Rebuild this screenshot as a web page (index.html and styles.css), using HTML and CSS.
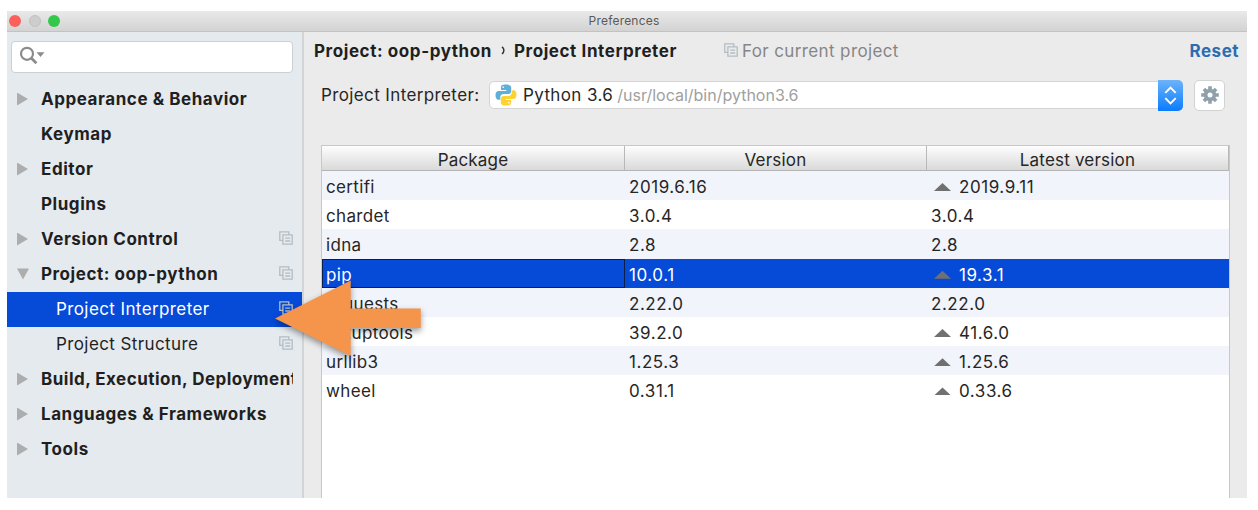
FILE: index.html
```html
<!DOCTYPE html>
<html lang="en">
<head>
<meta charset="utf-8">
<title>Preferences</title>
<link rel="stylesheet" href="styles.css">
</head>
<body>
<svg width="0" height="0" class="defs">
  <symbol id="copy" viewBox="0 0 14 14"><path d="M3.2 9.3H.8V.8h9v2.4M3.9 3.9h9.3v9.3H3.9zM6.2 7.1h5M6.2 10h5" fill="none" stroke="currentColor" stroke-width="1.3"/></symbol>
</svg>
<div class="window">
  <header class="titlebar">
    <div class="lights"><i class="light red"></i><i class="light idle"></i><i class="light green"></i></div>
    <span class="title">Preferences</span>
  </header>
  <div class="body">
    <aside class="sidebar">
      <div class="search">
        <svg width="28" height="20" viewBox="0 0 28 20"><circle cx="8" cy="7.8" r="6" fill="none" stroke="#8b8b8b" stroke-width="2.2"/><path d="M12.2 12l5.2 5.2" stroke="#8b8b8b" stroke-width="2.8"/><path d="M17.5 6.3h8L21.500 11z" fill="#8b8b8b"/></svg>
      </div>
      <ul class="tree">
        <li class="item"><i class="arrow"></i><span>Appearance &amp; Behavior</span></li>
        <li class="item"><i class="arrow none"></i><span>Keymap</span></li>
        <li class="item"><i class="arrow"></i><span>Editor</span></li>
        <li class="item"><i class="arrow none"></i><span>Plugins</span></li>
        <li class="item"><i class="arrow"></i><span>Version Control</span><svg class="copy"><use href="#copy"/></svg></li>
        <li class="item"><i class="arrow open"></i><span>Project: oop-python</span><svg class="copy"><use href="#copy"/></svg></li>
        <li class="item child selected"><span>Project Interpreter</span><svg class="copy"><use href="#copy"/></svg></li>
        <li class="item child"><span>Project Structure</span><svg class="copy"><use href="#copy"/></svg></li>
        <li class="item long"><i class="arrow"></i><span>Build, Execution, Deployment</span></li>
        <li class="item"><i class="arrow"></i><span>Languages &amp; Frameworks</span></li>
        <li class="item"><i class="arrow"></i><span>Tools</span></li>
      </ul>
    </aside>
    <main class="content">
      <div class="crumbs">
        <b>Project: oop-python</b><svg class="chevron" viewBox="0 0 5 9"><path d="M1 .8C3.500 2.500 3.500 6 1 8" fill="none" stroke="#333" stroke-width="1.500"/></svg><b>Project Interpreter</b>
        <svg class="copy"><use href="#copy"/></svg><span class="scope">For current project</span>
        <a class="reset">Reset</a>
      </div>
      <div class="chooser">
        <label class="label">Project Interpreter:</label>
        <div class="combo">
          <svg class="python" viewBox="0 0 22 22">
            <path d="M10.700.5c-4 0-4.800 1.200-4.800 3.100V6h5.400v.9H3.700C1.500 6.900.5 8.700.5 11.200s1 4.500 3 4.500h1.800v-2.500c0-2 1.500-3.200 3.400-3.200h4.800c1.500 0 2.700-1.200 2.700-2.800V3.600C16.200 1.500 14.500.5 10.700.5z" fill="#5fb0d9"/>
            <path d="M11.300 21.500c4 0 4.800-1.200 4.800-3.100V16h-5.400v-.9h7.600c2.200 0 3.200-1.800 3.200-4.300s-1-4.500-3-4.500h-1.800v2.500c0 2-1.500 3.200-3.400 3.200H8.500c-1.500 0-2.700 1.200-2.700 2.800v3.600c0 2.100 1.700 3.100 5.500 3.100z" fill="#ffd234"/>
            <circle cx="8.200" cy="3.200" r=".9" fill="#e5f2f8"/><circle cx="13.800" cy="18.700" r=".9" fill="#fff6d0"/>
          </svg>
          <span class="name">Python 3.6</span><span class="path">/usr/local/bin/python3.6</span>
          <span class="stepper"><svg width="13" height="19" viewBox="0 0 13 19"><path d="M1.300 6.800L6.500 1.600l5.200 5.200M1.300 12.200l5.200 5.200 5.200-5.200" fill="none" stroke="#fff" stroke-width="1.900"/></svg></span>
        </div>
        <div class="gear"><svg width="18" height="18" viewBox="-9 -9 18 18"><g stroke="#8fa0aa" stroke-width="3.600"><path d="M0-8.800V8.800M-8.800 0H8.800M-6.100-6.100L6.100 6.100M6.100-6.100L-6.100 6.100"/></g><circle r="6.200" fill="#8fa0aa"/><circle r="2.500" fill="#fff"/></svg></div>
      </div>
      <div class="table">
        <div class="row head"><span>Package</span><span>Version</span><span>Latest version</span></div>
        <div class="row"><span>certifi</span><span>2019.6.16</span><span><i class="up"></i>2019.9.11</span></div>
        <div class="row"><span>chardet</span><span>3.0.4</span><span>3.0.4</span></div>
        <div class="row"><span>idna</span><span>2.8</span><span>2.8</span></div>
        <div class="row active"><span>pip</span><span>10.0.1</span><span><i class="up"></i>19.3.1</span></div>
        <div class="row"><span>requests</span><span>2.22.0</span><span>2.22.0</span></div>
        <div class="row"><span>setuptools</span><span>39.2.0</span><span><i class="up"></i>41.6.0</span></div>
        <div class="row"><span>urllib3</span><span>1.25.3</span><span><i class="up"></i>1.25.6</span></div>
        <div class="row"><span>wheel</span><span>0.31.1</span><span><i class="up"></i>0.33.6</span></div>
      </div>
    </main>
  </div>
</div>
<svg class="pointer" width="170" height="100" viewBox="0 0 170 100"><path d="M5 48.500L80.700 10.500V38.500H150.800V58H80.700V86z" fill="#f5954c"/></svg>
</body>
</html>
```
FILE: styles.css
```css
* { box-sizing: border-box; }
body {
  margin: 0;
  width: 1258px;
  height: 510px;
  overflow: hidden;
  background: #fff;
  padding: 11px 11px 12px 7px;
  font: 17px/20px Inter, "Liberation Sans", sans-serif;
  letter-spacing: .38px;
  color: #262626;
}
.defs, .pointer { position: absolute; }
.window { display: flex; flex-direction: column; height: 487px; background: #ebebeb; }
.titlebar {
  display: grid;
  grid-template-columns: 1fr auto 1fr;
  align-items: center;
  height: 21px;
  padding: 0 8px 0 2px;
  background: linear-gradient(#e9e9e9, #d3d3d3);
  border-bottom: 1px solid #c3c3c3;
}
.lights { display: flex; gap: 7.500px; }
.light { width: 12px; height: 12px; border-radius: 50%; }
.red { background: #fc605b; }
.idle { background: #cdcdcd; border: 1px solid #c0c0c0; }
.green { background: #34c84a; }
.title { font-size: 12px; line-height: 18px; color: #5a5a5a; letter-spacing: .2px; }
.body { display: flex; flex: 1; }
.sidebar { width: 297px; flex: none; padding-top: 9px; background: #e5eaee; border-right: 2px solid #d2d4d6; }
.search {
  display: flex;
  align-items: center;
  width: 282px;
  height: 32px;
  margin-left: 4px;
  padding-left: 7px;
  background: #fff;
  border: 1.500px solid #cbd0d4;
  border-radius: 4px;
}
.search svg { margin-top: -3px; }
.tree { list-style: none; margin: 9px 0 0; padding: 0; }
.item { display: flex; align-items: center; height: 35px; padding: 0 9px 1px 10px; font-weight: 700; letter-spacing: .55px; color: #1f1f1f; white-space: nowrap; }
.item > span { flex: 1; overflow: hidden; }
.long { letter-spacing: .48px; }
.arrow { width: 24px; height: 13px; flex: none; background: #adadad; clip-path: polygon(0 0, 11px 50%, 0 100%); }
.arrow.none { visibility: hidden; }
.arrow.open { clip-path: polygon(0 1px, 12px 1px, 6px 12px); }
.child { padding-left: 49px; font-weight: 400; letter-spacing: .4px; }
.selected { background: #064ad8; color: #fff; }
.copy { width: 14px; height: 14px; flex: none; color: #b3bdc4; }
.tree .copy { margin-top: -2px; }
.content { flex: 1; display: flex; flex-direction: column; padding: 9px 18px 0 17px; }
.crumbs { display: flex; align-items: center; height: 20px; margin-right: -10px; margin-left: -7px; padding-bottom: 1px; font-weight: 700; color: #1f1f1f; }
.crumbs b { font-weight: 700; letter-spacing: .58px; }
.chevron { width: 5px; height: 9px; margin: 0 8px 0 9px; }
.crumbs .copy { margin: -2px 0 0 47px; }
.scope { margin-left: 4px; font-weight: 400; color: #868686; }
.reset { margin-left: auto; padding-right: 1px; color: #2b6db0; letter-spacing: .5px; }
.chooser { display: flex; align-items: center; height: 32px; margin-top: 18px; }
.label { width: 168px; }
.combo { display: flex; align-items: center; width: 694px; height: 28px; background: #fff; border: 1px solid #d4d4d4; border-radius: 5px; padding-left: 5px; }
.python { width: 22px; height: 22px; }
.name { margin-left: 6px; }
.path { margin-left: 4px; font-size: 16px; letter-spacing: 0; color: #a0a0a0; }
.stepper { display: flex; align-items: center; justify-content: center; width: 25px; height: 31px; margin: 0 -1px 0 auto; background: linear-gradient(#6cb3fa, #0a7cff); border-radius: 0 5px 5px 0; }
.gear { display: flex; align-items: center; justify-content: center; width: 31px; height: 31px; margin-left: 11px; background: #fff; border: 1px solid #d2d2d2; border-radius: 5px; }
.table { flex: 1; width: 909px; margin-top: 34px; background: #fff; border: 1px solid #c8c8c8; border-bottom: 0; }
.row { display: grid; grid-template-columns: 303px 302px 1fr; height: 29.200px; }
.row > span { display: flex; align-items: center; padding: 3px 0 0 4px; letter-spacing: .55px; }
.row > span:first-child { letter-spacing: .35px; }
.row:nth-child(even) { background: #f1f4fa; }
.row.head { height: 25px; background: linear-gradient(#fdfdfd, #d9d9d9); border-bottom: 1px solid #b4b4b4; }
.row.head > span { justify-content: center; padding: 4px 0 0; letter-spacing: .2px; border-right: 1px solid #b8b8b8; }
.row.active { background: #064ad8; color: #fff; }
.active > span:first-child { box-shadow: inset 0 0 0 1px #0b1f4c; }
.up { width: 17px; height: 8px; margin: 0 8px 0 3px; background: #707070; clip-path: polygon(0 100%, 50% 0, 100% 100%); }
.pointer { left: 270px; top: 270px; filter: drop-shadow(0 3px 3px rgba(0, 0, 0, .4)); }
```
